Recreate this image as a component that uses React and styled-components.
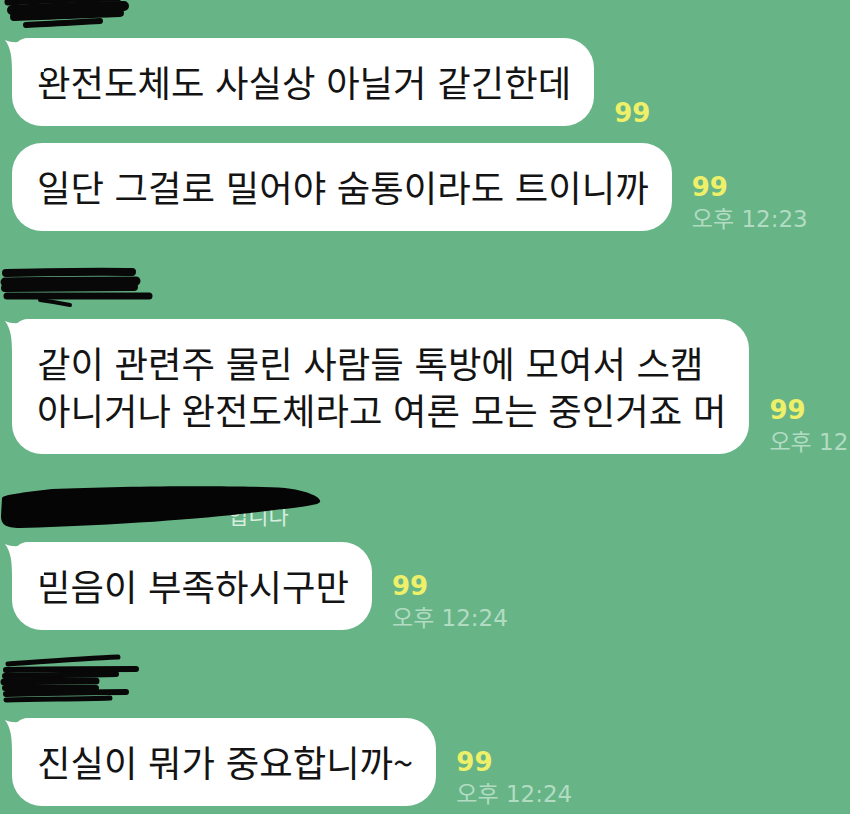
import styled, { createGlobalStyle } from "styled-components";

const GlobalStyle = createGlobalStyle`
  html, body {
    margin: 0;
    padding: 0;
    background: #67b487;
  }
  body {
    font-family: "Noto Sans CJK KR", "Noto Sans", sans-serif;
  }
`;

const chat = [
  {
    name: "top",
    messages: [
      { text: ["완전도체도 사실상 아닐거 같긴한데"], read: "99" },
      { text: ["일단 그걸로 밀어야 숨통이라도 트이니까"], read: "99", time: "오후 12:23" },
    ],
  },
  {
    name: "bars",
    messages: [
      {
        text: ["같이 관련주 물린 사람들 톡방에 모여서 스캠", "아니거나 완전도체라고 여론 모는 중인거죠 머"],
        read: "99",
        time: "오후 12:23",
      },
    ],
  },
  {
    name: "blob",
    messages: [{ text: ["믿음이 부족하시구만"], read: "99", time: "오후 12:24" }],
  },
  {
    name: "lines",
    messages: [{ text: ["진실이 뭐가 중요합니까~"], read: "99", time: "오후 12:24" }],
  },
];

const Scribble = ({ kind }) => {
  if (kind === "top") {
    return (
      <ScribbleSvg width="160" height="46" viewBox="0 0 160 46">
        <g stroke="#080808" strokeLinecap="round" fill="none">
          <path d="M8 22 C 40 20, 80 19, 118 18" strokeWidth="7" />
          <path d="M12 30 C 50 28, 90 26, 124 26" strokeWidth="10" />
          <path d="M14 37 C 50 36, 90 34, 120 33" strokeWidth="8" />
          <path d="M26 45 C 50 44, 80 42, 100 41" strokeWidth="6" />
        </g>
      </ScribbleSvg>
    );
  }
  if (kind === "bars") {
    return (
      <ScribbleSvg width="160" height="46" viewBox="0 0 160 46">
        <g stroke="#080808" strokeLinecap="round" fill="none">
          <path d="M6 12 C 50 11, 100 10, 132 11" strokeWidth="8" />
          <path d="M5 21 C 50 20, 100 20, 136 20" strokeWidth="9" />
          <path d="M5 27 C 50 27, 100 26, 134 26" strokeWidth="8" />
          <path d="M7 35 C 50 35, 110 35, 149 35" strokeWidth="7" />
          <path d="M40 39 C 55 41, 65 43, 70 44" strokeWidth="4" />
        </g>
      </ScribbleSvg>
    );
  }
  if (kind === "blob") {
    return (
      <ScribbleSvg width="330" height="46" viewBox="0 0 330 46">
        <path
          d="M2 14 C 4 10, 30 8, 52 5 C 120 2, 240 1, 285 4 C 305 6, 322 13, 320 18 C 318 22, 290 24, 250 29 C 200 35, 120 41, 20 44 C 5 44, 1 40, 1 32 Z"
          fill="#050505"
        />
      </ScribbleSvg>
    );
  }
  if (kind === "lines") {
    return (
      <ScribbleSvg width="160" height="46" viewBox="0 0 160 46">
        <g stroke="#080808" strokeLinecap="round" fill="none">
          <path d="M8 4 C 50 1, 90 -2, 118 -3" strokeWidth="5" />
          <path d="M6 10 C 50 9, 100 9, 136 9" strokeWidth="6" />
          <path d="M5 16 C 40 15, 80 15, 116 14" strokeWidth="6" />
          <path d="M4 22 C 40 21, 70 21, 96 21" strokeWidth="7" />
          <path d="M5 28 C 40 28, 70 28, 96 28" strokeWidth="6" />
          <path d="M6 34 C 50 33, 100 32, 126 32" strokeWidth="6" />
          <path d="M6 40 C 40 39, 80 39, 110 38" strokeWidth="5" />
        </g>
      </ScribbleSvg>
    );
  }
  return null;
};

const Tail = () => (
  <TailSvg width="40" height="34" viewBox="0 0 40 34">
    <path d="M1 2 C 10 6, 20 4, 30 0 L 40 0 L 40 34 L 8 34 C 8 20, 7 10, 1 2 Z" fill="#ffffff" />
  </TailSvg>
);

export default function App() {
  return (
    <>
      <GlobalStyle />
      <Page>
        {chat.map((group, gi) => (
          <Group key={gi} $first={gi === 0}>
            <NameRow>
              {group.name === "blob" && <HiddenName>입니다</HiddenName>}
              <Scribble kind={group.name} />
            </NameRow>
            {group.messages.map((m, mi) => (
              <Row key={mi}>
                <Bubble $tail={mi === 0}>
                  {mi === 0 && <Tail />}
                  {m.text.map((line, li) => (
                    <Line key={li}>{line}</Line>
                  ))}
                </Bubble>
                <Meta>
                  <Read>{m.read}</Read>
                  {m.time && <Time>{m.time}</Time>}
                </Meta>
              </Row>
            ))}
          </Group>
        ))}
      </Page>
    </>
  );
}

const Page = styled.div`
  width: 850px;
  height: 814px;
  overflow: hidden;
  background: #67b487;
  display: flex;
  flex-direction: column;
  gap: 30px;
`;

const Group = styled.section`
  display: flex;
  flex-direction: column;
  gap: 17px;
  margin-top: ${(p) => (p.$first ? "-20px" : "0")};
`;

const NameRow = styled.div`
  position: relative;
  height: 46px;
  margin-bottom: -5px;
`;

const HiddenName = styled.span`
  display: block;
  padding: 17px 0 0 228px;
  font-size: 22px;
  line-height: 26px;
  color: rgba(236, 248, 240, 0.85);
`;

const ScribbleSvg = styled.svg`
  position: absolute;
  left: 0;
  top: 0;
  overflow: visible;
`;

const Row = styled.div`
  display: flex;
  align-items: flex-end;
  gap: 20px;
  padding-left: 12px;
`;

const Bubble = styled.div`
  position: relative;
  background: #ffffff;
  border-radius: 30px;
  border-top-left-radius: ${(p) => (p.$tail ? "16px" : "30px")};
  padding: 20px 23px 21px 25px;
  color: #141414;
  font-family: "Noto Sans CJK KR", "Noto Sans", sans-serif;
  font-size: 36.4px;
  line-height: 47px;
  word-spacing: 2.5px;
  white-space: nowrap;
`;

const TailSvg = styled.svg`
  position: absolute;
  left: -8px;
  top: 0;
`;

const Line = styled.div``;

const Meta = styled.div`
  display: flex;
  flex-direction: column;
  white-space: nowrap;
  font-family: "DejaVu Sans", "Noto Sans CJK KR", sans-serif;
`;

const Read = styled.span`
  color: #eef06a;
  font-weight: 700;
  font-size: 26px;
  line-height: 26px;
`;

const Time = styled.span`
  margin-top: 7px;
  color: #b2dcc2;
  font-size: 23px;
  line-height: 24px;
`;
